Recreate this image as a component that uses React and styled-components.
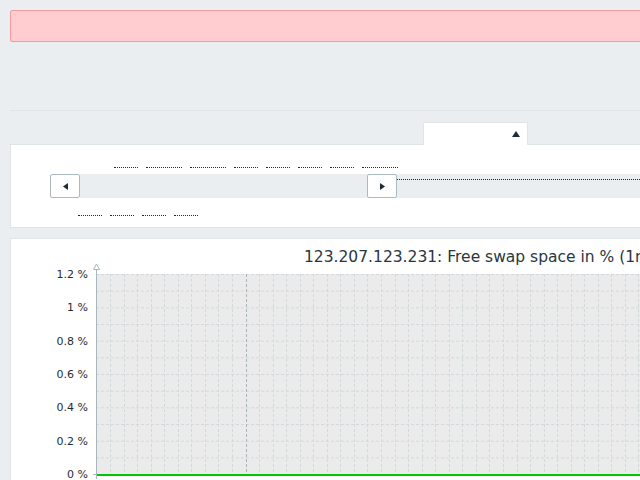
import React from "react";
import styled, { createGlobalStyle } from "styled-components";

const GlobalStyle = createGlobalStyle`
  html, body {
    margin: 0;
    padding: 0;
    background: #ebeef0;
    overflow: hidden;
  }
  body {
    font-family: "DejaVu Sans", "Liberation Sans", sans-serif;
    color: #1f2c33;
  }
`;

const TOP_LINKS = [24, 36, 36, 24, 24, 24, 24, 36];
const BOTTOM_LINKS = [24, 24, 24, 24];

function Chart() {
  const x0 = 85;
  const y0 = 35;
  const y1 = 235;
  const width = 1200;
  const labels = ["1.2 %", "1 %", "0.8 %", "0.6 %", "0.4 %", "0.2 %", "0 %"];
  const hLines = [];
  for (let i = 0; i <= 12; i++) hLines.push(y0 + (i * (y1 - y0)) / 12);
  const vLines = [];
  for (let i = 0; i < 80; i++) vLines.push(x0 + 14 + i * 13.55);

  return (
    <svg width={width} height={260} style={{ display: "block" }}>
      <text
        x={293}
        y={23}
        fontFamily="DejaVu Sans, sans-serif"
        fontSize="15.5"
        fill="#2a363d"
      >
        123.207.123.231: Free swap space in % (1m)
      </text>
      <rect x={x0} y={y0} width={width - x0} height={y1 - y0} fill="#ebebeb" />
      {hLines.map((y, i) => (
        <line
          key={"h" + i}
          x1={x0}
          x2={width}
          y1={y + 0.5}
          y2={y + 0.5}
          stroke="#d2d9dd"
          strokeDasharray="3 2"
        />
      ))}
      {vLines.map((x, i) => (
        <line
          key={"v" + i}
          x1={Math.round(x) + 0.5}
          x2={Math.round(x) + 0.5}
          y1={y0}
          y2={y1}
          stroke={i === 10 ? "#a9b3b9" : "#d2d9dd"}
          strokeDasharray="3 2"
        />
      ))}
      {labels.map((l, i) => (
        <text
          key={l}
          x={77}
          y={y0 + (i * (y1 - y0)) / 6 + 4}
          textAnchor="end"
          fontFamily="DejaVu Sans, sans-serif"
          fontSize="11"
          fill="#1f2c33"
        >
          {l}
        </text>
      ))}
      <line x1={x0 + 0.5} x2={x0 + 0.5} y1={30} y2={240} stroke="#a9b6be" />
      <polygon
        points={`${x0 + 0.5},25 ${x0 + 3.5},30.5 ${x0 - 2.5},30.5`}
        fill="#ffffff"
        stroke="#a9b6be"
      />
      <line x1={x0 - 3} x2={x0} y1={y1 + 0.5} y2={y1 + 0.5} stroke="#a9b6be" />
      <rect x={x0 + 1} y={y1} width={width} height={2} fill="#00c800" />
    </svg>
  );
}

export default function App() {
  return (
    <Page>
      <GlobalStyle />
      <MessageBad />
      <Header />
      <FilterSection>
        <FilterTabs>
          <FilterTab>
            <svg width="8" height="6" viewBox="0 0 8 6">
              <polygon points="4,0 8,6 0,6" fill="#1f2c33" />
            </svg>
          </FilterTab>
        </FilterTabs>
        <FilterPanel>
          <LinkRow $offset={103} $height={23}>
            {TOP_LINKS.map((w, i) => (
              <DottedLink key={i} $width={w} />
            ))}
          </LinkRow>
          <Timeline>
            <NavButton>
              <svg width="5" height="7" viewBox="0 0 5 7">
                <polygon points="5,0 5,7 0,3.5" fill="#1f2c33" />
              </svg>
            </NavButton>
            <Track>
              <TrackSpacer />
              <NavButton>
                <svg width="5" height="7" viewBox="0 0 5 7">
                  <polygon points="0,0 5,3.5 0,7" fill="#1f2c33" />
                </svg>
              </NavButton>
              <Period />
            </Track>
          </Timeline>
          <LinkRow $offset={67} $height={18}>
            {BOTTOM_LINKS.map((w, i) => (
              <DottedLink key={i} $width={w} />
            ))}
          </LinkRow>
        </FilterPanel>
      </FilterSection>
      <GraphPanel>
        <Chart />
      </GraphPanel>
    </Page>
  );
}

const Page = styled.div`
  width: 1220px;
  padding: 10px 0 0 10px;
  box-sizing: border-box;
`;

const MessageBad = styled.div`
  height: 30px;
  background: #ffccd0;
  border: 1px solid #f49a9d;
  border-radius: 2px;
`;

const Header = styled.div`
  height: 68px;
  border-bottom: 1px solid #dfe4e7;
`;

const FilterSection = styled.div`
  margin-top: 11px;
`;

const FilterTabs = styled.div`
  display: flex;
  padding-left: 413px;
  position: relative;
  z-index: 1;
  margin-bottom: -1px;
`;

const FilterTab = styled.div`
  width: 105px;
  height: 23px;
  background: #ffffff;
  border: 1px solid #dfe4e7;
  border-bottom: none;
  border-radius: 2px 2px 0 0;
  display: flex;
  align-items: center;
  justify-content: flex-end;
  padding-right: 7px;
  box-sizing: border-box;
`;

const FilterPanel = styled.div`
  background: #ffffff;
  border: 1px solid #dfe4e7;
  border-right: none;
  padding-bottom: 11px;
`;

const LinkRow = styled.div`
  display: flex;
  gap: 8px;
  height: ${(p) => p.$height}px;
  padding-left: ${(p) => p.$offset}px;
  align-items: flex-end;
`;

const DottedLink = styled.span`
  display: block;
  width: ${(p) => p.$width}px;
  border-bottom: 1px dotted #1f2c33;
`;

const Timeline = styled.div`
  display: flex;
  margin-top: 6px;
  padding-left: 39px;
  height: 24px;
`;

const NavButton = styled.div`
  width: 30px;
  height: 24px;
  box-sizing: border-box;
  background: #ffffff;
  border: 1px solid #acbbc2;
  border-radius: 2px;
  display: flex;
  align-items: center;
  justify-content: center;
  flex: none;
`;

const Track = styled.div`
  flex: 1;
  display: flex;
  background: #ebeef0;
`;

const TrackSpacer = styled.div`
  width: 287px;
  flex: none;
`;

const Period = styled.div`
  flex: 1;
  margin-top: 5px;
  height: 0;
  border-top: 1px dotted #1f2c33;
`;

const GraphPanel = styled.div`
  margin-top: 10px;
  background: #ffffff;
  border: 1px solid #dfe4e7;
  border-right: none;
  height: 300px;
  overflow: hidden;
`;
